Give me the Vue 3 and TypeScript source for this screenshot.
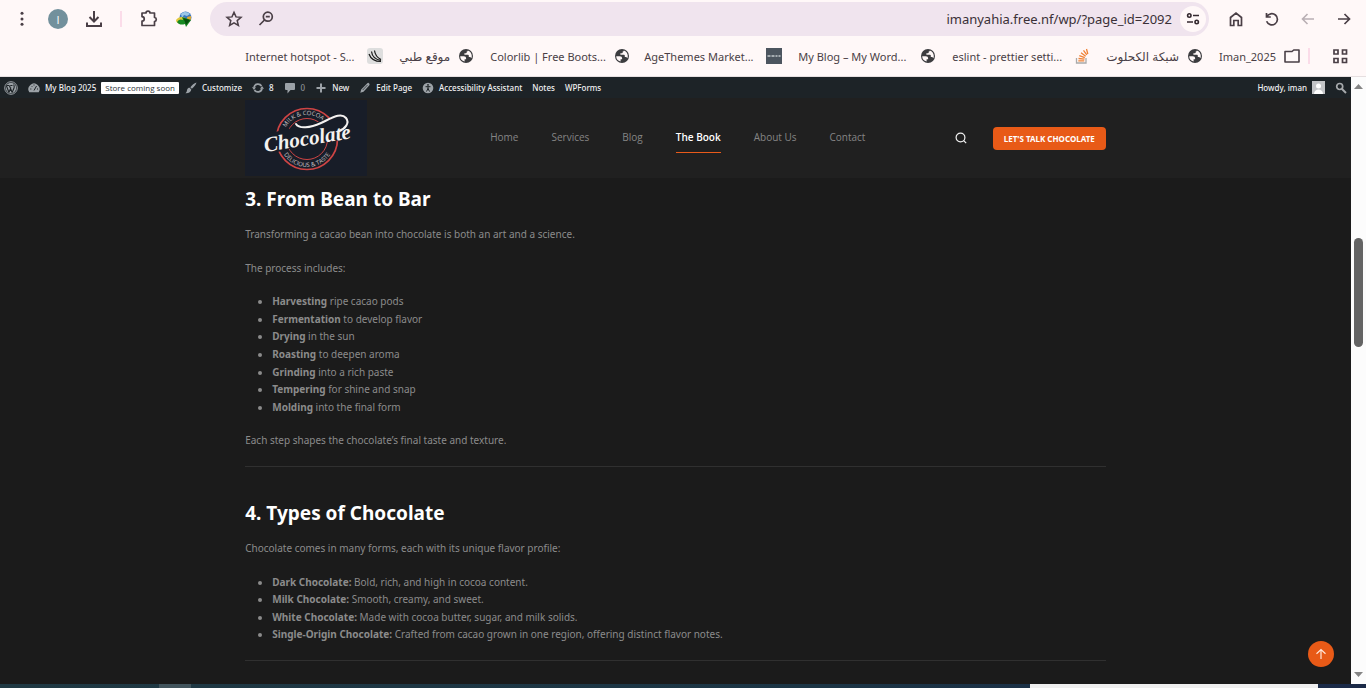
<script setup lang="ts">
interface Bookmark {
  label: string
  icon: 'feather' | 'globe' | 'theme' | 'stack' | 'folder'
  long?: boolean
  rtl?: boolean
}
interface Entry {
  term: string
  text: string
}

const bookmarks: Bookmark[] = [
  { label: 'Internet hotspot - S...', icon: 'feather', long: true },
  { label: 'موقع طبي', icon: 'globe', rtl: true },
  { label: 'Colorlib | Free Boots...', icon: 'globe', long: true },
  { label: 'AgeThemes Market...', icon: 'theme', long: true },
  { label: 'My Blog – My Word...', icon: 'globe', long: true },
  { label: 'eslint - prettier setti...', icon: 'stack', long: true },
  { label: 'شبكة الكحلوت', icon: 'globe', rtl: true },
  { label: 'Iman_2025', icon: 'folder' },
]

const nav: string[] = ['Home', 'Services', 'Blog', 'The Book', 'About Us', 'Contact']
const current = 'The Book'

const steps: Entry[] = [
  { term: 'Harvesting', text: ' ripe cacao pods' },
  { term: 'Fermentation', text: ' to develop flavor' },
  { term: 'Drying', text: ' in the sun' },
  { term: 'Roasting', text: ' to deepen aroma' },
  { term: 'Grinding', text: ' into a rich paste' },
  { term: 'Tempering', text: ' for shine and snap' },
  { term: 'Molding', text: ' into the final form' },
]
const kinds: Entry[] = [
  { term: 'Dark Chocolate:', text: ' Bold, rich, and high in cocoa content.' },
  { term: 'Milk Chocolate:', text: ' Smooth, creamy, and sweet.' },
  { term: 'White Chocolate:', text: ' Made with cocoa butter, sugar, and milk solids.' },
  { term: 'Single-Origin Chocolate:', text: ' Crafted from cacao grown in one region, offering distinct flavor notes.' },
]
</script>

<template>
  <div class="window">
    <div class="toolbar">
      <div class="tools">
        <button class="tool" aria-label="Menu">
          <svg width="20" height="20" viewBox="0 0 20 20" fill="#4a3f46"><circle cx="10" cy="4.3" r="1.5" /><circle cx="10" cy="10" r="1.5" /><circle cx="10" cy="15.3" r="1.5" /></svg>
        </button>
        <button class="tool profile" aria-label="Profile">I</button>
        <button class="tool" aria-label="Downloads">
          <svg width="20" height="20" viewBox="0 0 20 20" fill="none" stroke="#4a3f46" stroke-width="2"><path d="M10 2v10M5.5 8l4.5 4.5L14.500 8M3 13.500v3.500h14v-3.500" /></svg>
        </button>
        <span class="rule"></span>
        <button class="tool" aria-label="Extensions">
          <svg width="20" height="20" viewBox="0 0 20 20" fill="none" stroke="#4a3f46" stroke-width="1.700" stroke-linejoin="round"><path d="M4 4h4c0-2.400 4-2.400 4 0h4.500v4.500c2.400.3 2.400 3.600 0 4v4H4v-4.300c3-.3 3-4.300 0-4.500z" /></svg>
        </button>
        <button class="tool" aria-label="Download manager">
          <svg width="18" height="18" viewBox="0 0 18 18"><circle cx="10.500" cy="7.500" r="6" fill="#3b78c2" /><path d="M6 4c3-3 7-2 9 0l-3 2-3-1-2 3z" fill="#9cc7e8" /><path d="M12 7l4-1c.5 3-1 6-3 7z" fill="#e0a62c" /><path d="M1 10c2-3 6-4 9-2l-3 5c-3 1-6 0-6-3z" fill="#e3c93d" /><path d="M2 12c2-3 4-3 6-2l-1-3 9 3-5 7-1-3c-3 1-6 1-8-2z" fill="#188a22" /><path d="M8 8l7 2-4 5-1-3z" fill="#07500d" /></svg>
        </button>
      </div>
      <div class="address">
        <button class="tool" aria-label="Bookmark this page">
          <svg width="18" height="18" viewBox="0 0 18 18" fill="none" stroke="#4a3f46" stroke-width="1.500"><path d="M9 2.300l2 4.600 5 .4-3.800 3.300 1.200 4.900L9 12.900l-4.400 2.600 1.200-4.900L2 7.300l5-.4z" /></svg>
        </button>
        <button class="tool" aria-label="Zoom">
          <svg width="18" height="18" viewBox="0 0 18 18" fill="none" stroke="#4a3f46" stroke-width="1.700"><circle cx="10.800" cy="6.700" r="4.500" /><path d="M7.500 10L2.500 15M8.800 6.700h4" /></svg>
        </button>
        <input class="url" type="text" aria-label="Address" value="imanyahia.free.nf/wp/?page_id=2092" />
        <button class="site" aria-label="Site information">
          <svg width="16" height="16" viewBox="0 0 16 16" fill="none" stroke="#34292f" stroke-width="1.600"><circle cx="4.300" cy="4.500" r="1.700" /><path d="M8 4.500h6M2 11h6" /><circle cx="11.700" cy="11" r="1.700" /></svg>
        </button>
      </div>
      <div class="history">
        <button class="tool" aria-label="Home">
          <svg width="18" height="18" viewBox="0 0 18 18" fill="none" stroke="#4a3f46" stroke-width="1.700"><path d="M3.500 7.500L9 3l5.500 4.500V15.500h-3.300v-5H6.800v5H3.500z" /></svg>
        </button>
        <button class="tool" aria-label="Reload">
          <svg width="18" height="18" viewBox="0 0 18 18" fill="none" stroke="#4a3f46" stroke-width="1.700"><path d="M3.500 3v4h4.300M3.800 6.800a5.600 5.600 0 1 1-.2 4.500" /></svg>
        </button>
        <button class="tool" aria-label="Back" disabled>
          <svg width="18" height="18" viewBox="0 0 18 18" fill="none" stroke="#b9afb4" stroke-width="1.600"><path d="M15 9H4M8.500 4L3.500 9l5 5" /></svg>
        </button>
        <button class="tool" aria-label="Forward">
          <svg width="18" height="18" viewBox="0 0 18 18" fill="none" stroke="#4a3f46" stroke-width="1.700"><path d="M3 9h11M9.500 4l5 5-5 5" /></svg>
        </button>
      </div>
    </div>

    <nav class="bookmarks" aria-label="Bookmarks">
      <a v-for="b in bookmarks" :key="b.label" href="#" class="bookmark" :class="{ long: b.long, arabic: b.rtl }">
        <span :dir="b.rtl ? 'rtl' : 'ltr'">{{ b.label }}</span>
        <svg v-if="b.icon === 'globe'" width="16" height="16" viewBox="0 0 16 16"><circle cx="8" cy="8" r="7" fill="#3c3c3f" /><path d="M2.200 8.300h3.600c1.600 0 2.300.9 2.300 2v1H6.600v2.300C4 13 2.200 11 2.200 8.300zM9.800 2.500c2.300.7 4 2.900 4 5.500 0 .8-.2 1.600-.5 2.300-.3-.8-.9-1.200-1.700-1.200h-.8V7.600c0-.5-.4-.8-.8-.8H6.400V5.300h1.500c.5 0 .8-.4.8-.8V3.600c.6 0 1.100-.5 1.100-1.100z" fill="#fff8f8" /></svg>
        <svg v-else-if="b.icon === 'feather'" width="16" height="16" viewBox="0 0 16 16"><rect width="16" height="16" rx="3" fill="#dedede" /><path d="M7.500 2.500C8 7 10 9.500 14 11.500M4.500 3.500c.5 4.500 4 8 9.500 9M2 6c1.500 4.300 6 7.500 12 7.500" fill="none" stroke="#171717" stroke-width="1.200" /></svg>
        <svg v-else-if="b.icon === 'theme'" width="16" height="16" viewBox="0 0 16 16"><rect width="16" height="16" fill="#4c555f" /><path d="M1.500 8h3m1 0h3m1 0h2m1 0h2" stroke="#c4cace" stroke-width="1.700" /></svg>
        <svg v-else-if="b.icon === 'stack'" width="16" height="16" viewBox="0 0 16 16" fill="none" stroke-width="1.300"><path d="M2.500 10v5h9.500v-5" stroke="#a9a9a9" /><path d="M4.300 12.800h6M4.500 10.500l6 .7M5.300 7.700l5.500 2M7 4.800l4.700 3.500M9.500 2.300l3.300 4.500M12.500 1l1.300 5" stroke="#ef8236" /></svg>
        <svg v-else width="16" height="16" viewBox="0 0 16 16" fill="none" stroke="#4a3f46" stroke-width="1.600"><path d="M1 3.500h7l1.700-1.500H15v12H1z" stroke-linejoin="round" /></svg>
      </a>
      <span class="rule"></span>
      <button class="apps" aria-label="Apps">
        <svg width="16" height="16" viewBox="0 0 16 16" fill="none" stroke="#4a3f46" stroke-width="1.700"><path d="M2 2h4v4H2zM10.500 2h4v4h-4zM2 10.500h4v4H2zM10.500 10.500h4v4h-4z" /></svg>
      </button>
    </nav>

    <div class="viewport">
      <div class="page">
        <div class="admin">
          <a href="#" class="wp" aria-label="WordPress">
            <svg width="14" height="14" viewBox="0 0 14 14" fill="none"><circle cx="7" cy="7" r="6.300" stroke="#9ca2a7" /><circle cx="7" cy="7" r="5.200" fill="#9ca2a7" /><path d="M2.300 4.500l2.700 7M3 4.500h2M5.300 4.500l2.900 7M4.900 11.500L7 6.500M6.300 4.500h2.200M8.200 11.500L10 7c.8-1.600-.5-2.400 0-3.500" stroke="#1d2327" stroke-width="1.100" /></svg>
          </a>
          <a href="#" class="item">
            <svg width="12" height="12" viewBox="0 0 12 12"><path d="M1.300 10.200a5.600 5.600 0 1 1 9.400 0z" fill="#9ca2a7" /><path d="M6 8.500l2.500-4.500M2.300 7h1M3.500 4l.7.700M6 2.500v1M9 7h1" stroke="#1d2327" /></svg>
            My Blog 2025
          </a>
          <a href="#" class="badge">Store coming soon</a>
          <a href="#" class="item">
            <svg width="12" height="12" viewBox="0 0 12 12" fill="#9ca2a7"><path d="M11.500.5c-.7 2.300-2.300 4.500-4.600 6.200L5.300 5.200C7 3 9.200 1.300 11.500.5zM4.700 5.800l1.600 1.600c-.3 2.400-2.500 4-5.800 3.800C2 10 1.700 9 2.200 7.500c.4-1.200 1.400-1.800 2.500-1.700z" /></svg>
            Customize
          </a>
          <a href="#" class="item">
            <svg width="12" height="12" viewBox="0 0 12 12" fill="none" stroke="#9ca2a7" stroke-width="1.700"><path d="M2 5.500c.6-4 5.700-4.500 7.500-1.500M10 6.500c-.6 4-5.700 4.500-7.500 1.500" /><path d="M0 5.300h4L2 8zM8 6.700h4L10 4z" fill="#9ca2a7" stroke="none" /></svg>
            8
          </a>
          <a href="#" class="item muted">
            <svg width="12" height="12" viewBox="0 0 12 12" fill="#9ca2a7"><path d="M2 1h8q1 0 1 1v5q0 1-1 1H6.500L3.500 11.500V8H2Q1 8 1 7V2q0-1 1-1z" /></svg>
            0
          </a>
          <a href="#" class="item">
            <svg width="12" height="12" viewBox="0 0 12 12" stroke="#9ca2a7" stroke-width="2"><path d="M6 1.500v9M1.500 6h9" /></svg>
            New
          </a>
          <a href="#" class="item">
            <svg width="12" height="12" viewBox="0 0 12 12"><path d="M8.300 1.200q1-.8 1.900.3t0 2L4.500 9.700 1.300 10.700l.9-3.300z" fill="#9ca2a7" /><path d="M3.700 8L8.500 3" stroke="#1d2327" stroke-width=".7" /></svg>
            Edit Page
          </a>
          <a href="#" class="item">
            <svg width="12" height="12" viewBox="0 0 12 12"><circle cx="6" cy="6" r="5.300" fill="#9ca2a7" /><circle cx="6" cy="2.900" r=".9" fill="#1d2327" /><path d="M3.500 4.700h5M6 4.500v2.500M6 6.500L4.500 9.500M6 6.500L7.500 9.500" stroke="#1d2327" /></svg>
            Accessibility Assistant
          </a>
          <a href="#" class="item">Notes</a>
          <a href="#" class="item">WPForms</a>
          <a href="#" class="howdy">
            Howdy, iman
            <svg width="13" height="13" viewBox="0 0 13 13"><rect width="13" height="13" fill="#c3c4c7" /><circle cx="6.500" cy="5" r="2.500" fill="#fff" /><path d="M2 13c0-6 9-6 9 0z" fill="#fff" /></svg>
          </a>
          <button class="find" aria-label="Search admin">
            <svg width="12" height="12" viewBox="0 0 12 12" fill="none" stroke="#a7aaad" stroke-width="1.700"><circle cx="4.700" cy="4.500" r="3" /><path d="M7 7l4 4" stroke-width="2" /></svg>
          </button>
        </div>

        <header class="header">
          <div class="inner">
            <a href="#" class="logo" aria-label="Chocolate">
              <svg width="122" height="76" viewBox="0 0 122 76">
                <rect width="122" height="76" fill="#181d28" />
                <g fill="none" stroke="#ce4444"><circle cx="62" cy="39" r="30.500" stroke-width="1.700" /><circle cx="62" cy="39" r="20.500" stroke-width="1" /></g>
                <path d="M17 45L20 34Q50 28 84 19L105 22L105 39Q70 42 21 55z" fill="#181d28" />
                <path id="upper-arc" d="M38 39a24 24 0 0 1 48 0" fill="none" />
                <path id="lower-arc" d="M34 39a28 28 0 0 0 56 0" fill="none" />
                <g class="ring" text-anchor="middle"><text><textPath href="#upper-arc" startOffset="44%">MILK &amp; COCOA</textPath></text><text><textPath href="#lower-arc" startOffset="50%">DELICIOUS &amp; TASTE</textPath></text></g>
                <text class="script" x="20" y="52" transform="rotate(-9 20 52)">Chocolate</text>
                <path d="M51 24c3 5 14 4 25-1s20-11 25-5c4 5-1 11-7 13" fill="none" stroke="#f4f1f0" stroke-width="2" stroke-linecap="round" />
              </svg>
            </a>
            <nav class="menu" aria-label="Main">
              <a v-for="n in nav" :key="n" href="#" :class="{ active: n === current }">{{ n }}</a>
            </nav>
            <button class="search" aria-label="Search">
              <svg width="12" height="12" viewBox="0 0 12 12" fill="none" stroke="#f2f2f2" stroke-width="1.200"><circle cx="5.500" cy="5.500" r="4.400" /><path d="M8.700 8.700l2.500 2.500" /></svg>
            </button>
            <a href="#" class="cta">LET'S TALK CHOCOLATE</a>
          </div>
        </header>

        <main class="content">
          <h2>3. From Bean to Bar</h2>
          <p>Transforming a cacao bean into chocolate is both an art and a science.</p>
          <p>The process includes:</p>
          <ul>
            <li v-for="s in steps" :key="s.term"><strong>{{ s.term }}</strong>{{ s.text }}</li>
          </ul>
          <p>Each step shapes the chocolate’s final taste and texture.</p>
          <hr />
          <h2>4. Types of Chocolate</h2>
          <p>Chocolate comes in many forms, each with its unique flavor profile:</p>
          <ul>
            <li v-for="k in kinds" :key="k.term"><strong>{{ k.term }}</strong>{{ k.text }}</li>
          </ul>
          <hr />
        </main>

        <button class="top" aria-label="Back to top">
          <svg width="12" height="12" viewBox="0 0 12 12" fill="none" stroke="#ffe6d9" stroke-width="1.200"><path d="M6 11V1.500M1.500 5.800L6 1.500l4.500 4.300" /></svg>
        </button>
      </div>
      <div class="scrollbar">
        <svg width="9" height="5" viewBox="0 0 9 5"><path d="M0 5L4.500 0 9 5z" fill="#858585" /></svg>
        <div class="track"><div class="thumb"></div></div>
        <svg width="9" height="5" viewBox="0 0 9 5"><path d="M0 0L4.500 5 9 0z" fill="#858585" /></svg>
      </div>
    </div>
    <div class="taskbar"><span class="task"></span><span class="field"></span></div>
  </div>
</template>

<style>
body {
  margin: 0;
  overflow: hidden;
}
</style>

<style scoped>
.window {
  display: flex;
  flex-direction: column;
  height: 100vh;
  background: #fff8f8;
  font-family: "Noto Sans", "DejaVu Sans", sans-serif;
  color: #4a3f46;
}
button {
  border: 0;
  padding: 0;
  background: none;
  font-family: inherit;
}
a {
  color: inherit;
  text-decoration: none;
}
svg {
  display: block;
  flex: none;
}
.toolbar {
  display: flex;
  align-items: center;
  flex: none;
  height: 38px;
}
.tools {
  display: flex;
  align-items: center;
  gap: 16px;
  width: 198px;
  padding-left: 12px;
}
.tool {
  display: flex;
  align-items: center;
  justify-content: center;
  width: 20px;
  height: 20px;
}
.profile {
  border-radius: 50%;
  background: #72909c;
  color: #fff;
  font-family: "Open Sans", sans-serif;
  font-size: 11px;
}
.rule {
  width: 2px;
  height: 16px;
  background: #fbdce9;
}
.address {
  display: flex;
  align-items: center;
  flex: 1;
  gap: 12px;
  height: 34px;
  padding: 0 3px 0 14px;
  border-radius: 17px;
  background: #f0e4ee;
}
.url {
  flex: 1;
  min-width: 0;
  border: 0;
  padding: 0;
  outline: 0;
  background: none;
  color: #3a3037;
  font: 13px "Noto Sans", sans-serif;
  text-align: right;
}
.site {
  display: flex;
  align-items: center;
  justify-content: center;
  width: 26px;
  height: 26px;
  margin-left: -4px;
  border-radius: 50%;
  background: #fff8f8;
}
.history {
  display: flex;
  gap: 16px;
  padding: 0 12px 0 17px;
}
.bookmarks {
  display: flex;
  align-items: center;
  justify-content: flex-end;
  flex: none;
  height: 36px;
  padding: 0 18px 2px 0;
  border-bottom: 1px solid #e6dfe0;
  font-size: 11px;
  white-space: nowrap;
}
.bookmark {
  display: flex;
  align-items: center;
  justify-content: space-between;
  gap: 8px;
  margin-left: 16px;
}
.long {
  width: 138px;
}
.arabic {
  font-size: 12px;
}
.bookmarks .rule {
  margin-left: 8px;
}
.apps {
  margin-left: 22px;
}
.viewport {
  display: flex;
  flex: 1;
  min-height: 0;
}
.page {
  position: relative;
  flex: 1;
  min-width: 0;
  overflow: hidden;
  background: #1b1b1b;
}
.admin {
  display: flex;
  align-items: center;
  gap: 10px;
  height: 21px;
  padding: 0 4px;
  background: #1d2327;
  color: #f0f0f1;
  font-size: 8px;
  font-weight: 500;
  white-space: nowrap;
}
.item,
.howdy {
  display: flex;
  align-items: center;
  gap: 5px;
}
.muted {
  color: #8c9196;
}
.badge {
  margin: 0 -4px 0 -5px;
  padding: 0 4px;
  border-radius: 1px;
  background: #fff;
  color: #2c3338;
  font-family: "Open Sans", sans-serif;
  line-height: 12px;
}
.howdy {
  margin-left: auto;
}
.header {
  height: 80px;
  background: #202020;
}
.inner,
.content {
  width: 63.7%;
  margin: 0 auto;
}
.inner {
  display: flex;
  align-items: center;
  height: 100%;
}
.ring {
  fill: #c9c6c8;
  font-family: "Open Sans", sans-serif;
  font-size: 6px;
}
.script {
  fill: #f4f1f0;
  font-family: "Liberation Serif", serif;
  font-size: 21px;
  font-style: italic;
  font-weight: 700;
}
.menu {
  display: flex;
  flex: 1;
  gap: 33px;
  margin-left: 123px;
  color: #858585;
  font-family: "Open Sans", sans-serif;
  font-size: 10px;
  font-weight: 500;
  line-height: 29px;
}
.menu a {
  border-bottom: 1px solid transparent;
}
.menu .active {
  border-color: #e95a1a;
  color: #fff;
  font-weight: 600;
}
.cta {
  margin-left: 26px;
  padding: 0 11px;
  border-radius: 4px;
  background: #e85a17;
  color: #fff;
  font-size: 8px;
  font-weight: 700;
  line-height: 23px;
}
.content {
  padding-top: 7px;
  color: #8b8b8b;
  font-size: 10px;
  line-height: 1.76;
}
h2 {
  margin: 0 0 13px;
  color: #fff;
  font-size: 19px;
  line-height: 28px;
}
p,
ul {
  margin: 0 0 16px;
}
ul {
  padding-left: 27px;
}
hr {
  margin: 0 0 32px;
  border: 0;
  border-top: 1px solid #303030;
}
.top {
  position: absolute;
  right: 17px;
  bottom: 17px;
  display: flex;
  align-items: center;
  justify-content: center;
  width: 26px;
  height: 26px;
  border-radius: 50%;
  background: #e85a17;
}
.scrollbar {
  display: flex;
  flex-direction: column;
  align-items: center;
  gap: 7px;
  width: 15px;
  padding: 7px 0;
  box-sizing: border-box;
  background: #fcfcfc;
}
.track {
  flex: 1;
}
.thumb {
  width: 9px;
  height: 109px;
  margin-top: 142px;
  border-radius: 5px;
  background: #646464;
}
.taskbar {
  display: flex;
  justify-content: space-between;
  flex: none;
  height: 4px;
  padding: 0 48px 0 159px;
  background: linear-gradient(90deg, #203943, #1c3545 60%, #1b2a48);
}
.task {
  width: 32px;
  background: #42545c;
}
.field {
  width: 288px;
  background: #efefef;
}
</style>
